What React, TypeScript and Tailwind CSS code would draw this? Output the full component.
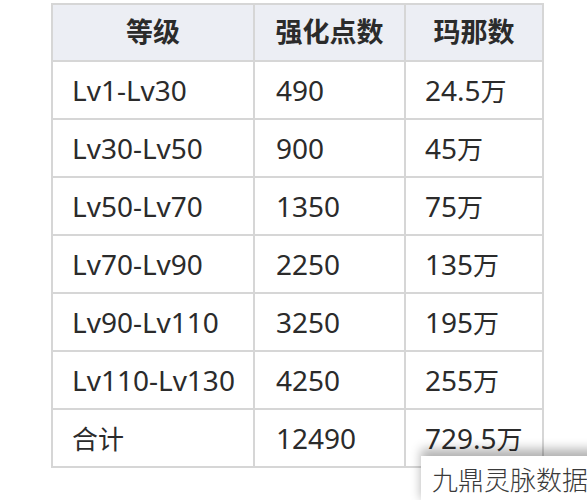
const rows = [
  ["Lv1-Lv30", "490", "24.5"],
  ["Lv30-Lv50", "900", "45"],
  ["Lv50-Lv70", "1350", "75"],
  ["Lv70-Lv90", "2250", "135"],
  ["Lv90-Lv110", "3250", "195"],
  ["Lv110-Lv130", "4250", "255"],
  ["合计", "12490", "729.5"],
];

export default function App() {
  return (
    <div
      className="relative w-[587px] h-[500px] bg-white overflow-hidden text-[#2b2b2b]"
      style={{ fontFamily: '"Noto Sans", "Noto Sans CJK SC", sans-serif' }}
    >
      <div className="pt-[3px] pl-[51px]">
        <table className="border-collapse text-[28px]">
          <colgroup>
            <col className="w-[202px]" />
            <col className="w-[151px]" />
            <col className="w-[138px]" />
          </colgroup>
          <thead>
            <tr className="h-[57px] bg-[#eceef4] text-[27px]">
              <th className="border-2 border-[#d6d6d6] font-bold">等级</th>
              <th className="border-2 border-[#d6d6d6] font-bold">强化点数</th>
              <th className="border-2 border-[#d6d6d6] font-bold">玛那数</th>
            </tr>
          </thead>
          <tbody>
            {rows.map((r) => (
              <tr key={r[0]} className="h-[58px]">
                <td className="border-2 border-[#d6d6d6] pl-[19px]">
                  {r[0] === "合计" ? <span className="text-[26px]">合计</span> : r[0]}
                </td>
                <td className="border-2 border-[#d6d6d6] pl-[21px]">{r[1]}</td>
                <td className="border-2 border-[#d6d6d6] pl-[19px]">
                  {r[2]}
                  <span className="text-[26px]">万</span>
                </td>
              </tr>
            ))}
          </tbody>
        </table>
      </div>
      {/* watermark pasted over the bottom-right corner */}
      <div className="absolute left-[421px] top-[456px] w-[180px] h-[50px] bg-white shadow-[0_-7px_10px_rgba(0,0,0,0.3)]">
        <div className="pl-[11px] pt-[11px] text-[26px] font-light text-[#3a3a3a] leading-none">九鼎灵脉数据</div>
      </div>
    </div>
  );
}
